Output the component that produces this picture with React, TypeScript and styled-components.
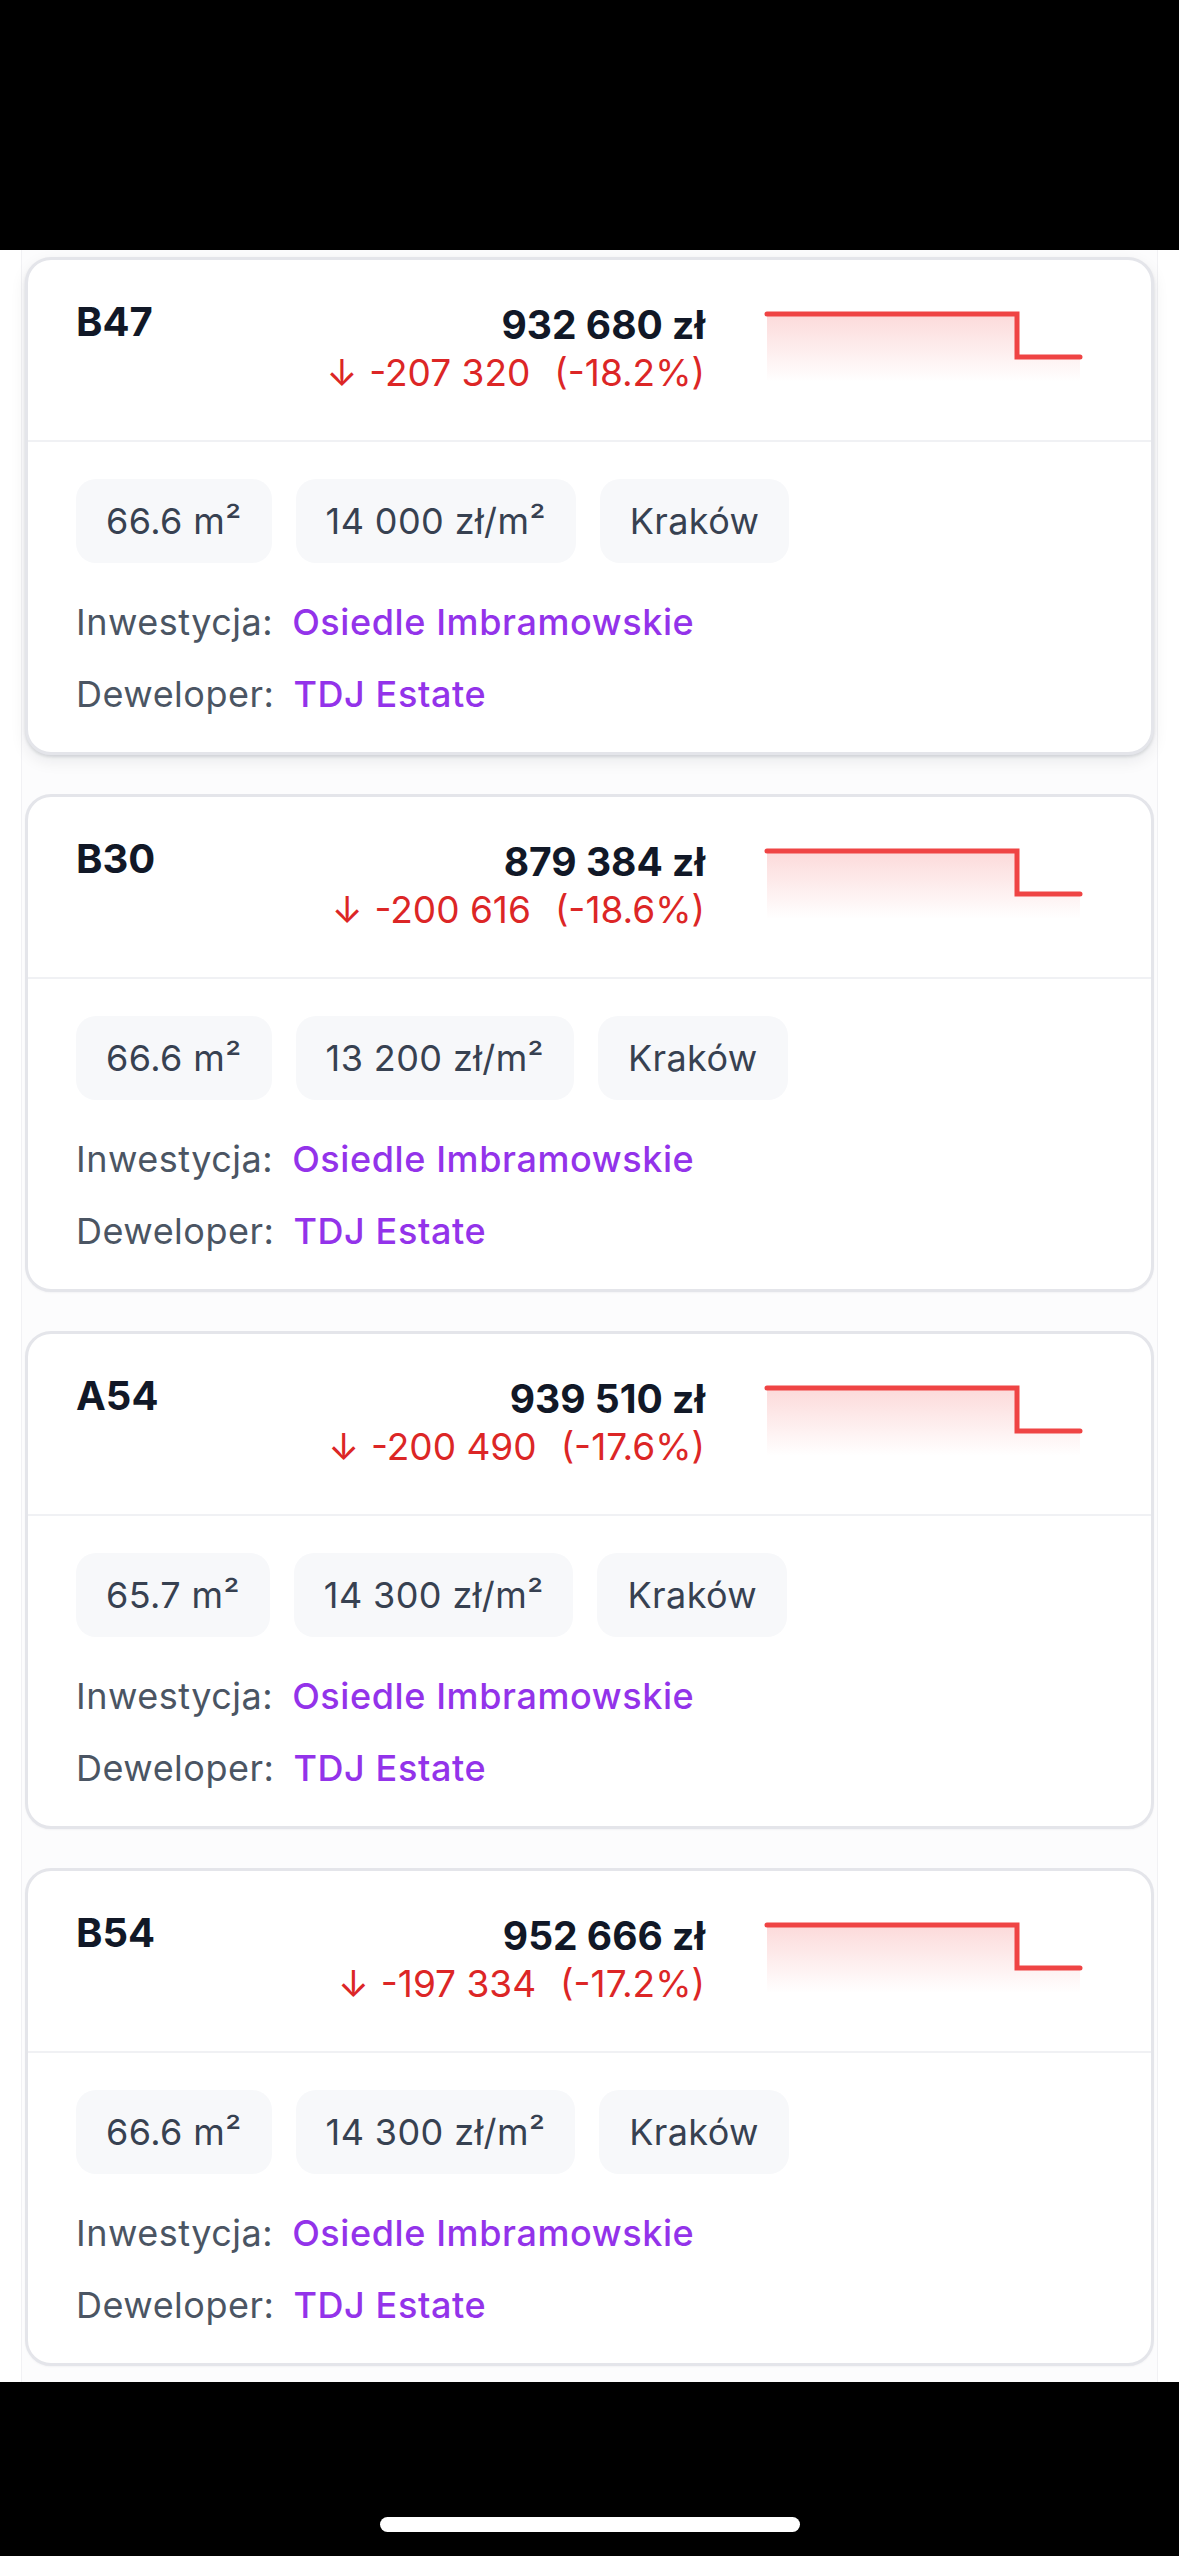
import React from "react";
import styled, { createGlobalStyle } from "styled-components";

interface Flat {
  id: string;
  price: string;
  change: string;
  percent: string;
  area: string;
  perMeter: string;
  city: string;
  investment: string;
  developer: string;
}

const flats: Flat[] = [
  {
    id: "B47",
    price: "932 680 zł",
    change: "-207 320",
    percent: "(-18.2%)",
    area: "66.6 m²",
    perMeter: "14 000 zł/m²",
    city: "Kraków",
    investment: "Osiedle Imbramowskie",
    developer: "TDJ Estate",
  },
  {
    id: "B30",
    price: "879 384 zł",
    change: "-200 616",
    percent: "(-18.6%)",
    area: "66.6 m²",
    perMeter: "13 200 zł/m²",
    city: "Kraków",
    investment: "Osiedle Imbramowskie",
    developer: "TDJ Estate",
  },
  {
    id: "A54",
    price: "939 510 zł",
    change: "-200 490",
    percent: "(-17.6%)",
    area: "65.7 m²",
    perMeter: "14 300 zł/m²",
    city: "Kraków",
    investment: "Osiedle Imbramowskie",
    developer: "TDJ Estate",
  },
  {
    id: "B54",
    price: "952 666 zł",
    change: "-197 334",
    percent: "(-17.2%)",
    area: "66.6 m²",
    perMeter: "14 300 zł/m²",
    city: "Kraków",
    investment: "Osiedle Imbramowskie",
    developer: "TDJ Estate",
  },
];

// small step chart, price dropped once at the end
function PriceChart({ id }: { id: string }) {
  const gradId = `fill-${id}`;
  return (
    <Chart width="358" height="90" viewBox="0 0 358 90">
      <defs>
        <linearGradient id={gradId} x1="0" y1="0" x2="0" y2="1">
          <stop offset="0%" stopColor="#ef4444" stopOpacity="0.2" />
          <stop offset="100%" stopColor="#ef4444" stopOpacity="0" />
        </linearGradient>
      </defs>
      <path d="M22 14 H272 V57 H335 V82 H22 Z" fill={`url(#${gradId})`} />
      <path
        d="M22 14 H272 V57 H335"
        fill="none"
        stroke="#ef4444"
        strokeWidth="5"
        strokeLinecap="round"
        strokeLinejoin="miter"
      />
    </Chart>
  );
}

function FlatCard({ flat, raised }: { flat: Flat; raised?: boolean }) {
  return (
    <Card $raised={raised}>
      <Header>
        <Name>{flat.id}</Name>
        <PriceBlock>
          <Price>{flat.price}</Price>
          <Change>
            <Arrow>↓</Arrow>
            <span>{flat.change}</span>
            <Percent>{flat.percent}</Percent>
          </Change>
        </PriceBlock>
        <PriceChart id={flat.id} />
      </Header>
      <Body>
        <Chips>
          <Chip>{flat.area}</Chip>
          <Chip>{flat.perMeter}</Chip>
          <Chip>{flat.city}</Chip>
        </Chips>
        <InfoRow>
          <Label>Inwestycja:</Label>
          <Value>{flat.investment}</Value>
        </InfoRow>
        <InfoRow>
          <Label>Deweloper:</Label>
          <Value>{flat.developer}</Value>
        </InfoRow>
      </Body>
    </Card>
  );
}

export default function App() {
  return (
    <>
      <GlobalStyle />
      <Screen>
        <TopBar />
        <List>
          {flats.map((flat, i) => (
            <FlatCard key={flat.id} flat={flat} raised={i === 0} />
          ))}
        </List>
        <BottomBar>
          <HomeIndicator />
        </BottomBar>
      </Screen>
    </>
  );
}

const GlobalStyle = createGlobalStyle`
  html, body {
    margin: 0;
    padding: 0;
    background: #ffffff;
  }
  body {
    font-family: Inter, "Noto Sans", sans-serif;
    -webkit-font-smoothing: antialiased;
  }
  * {
    box-sizing: border-box;
  }
`;

const Screen = styled.div`
  width: 1179px;
  height: 2556px;
  display: flex;
  flex-direction: column;
  overflow: hidden;
  background: #ffffff;
`;

const TopBar = styled.div`
  height: 250px;
  flex-shrink: 0;
  background: #000000;
`;

const List = styled.div`
  flex: 1;
  margin: 0 21px;
  padding: 7px 3px 16px;
  display: flex;
  flex-direction: column;
  gap: 39px;
  background: #fcfcfd;
  border-left: 1px solid #f1f1f4;
  border-right: 1px solid #f1f1f4;
`;

const Card = styled.div<{ $raised?: boolean }>`
  background: #ffffff;
  border: 3px solid #e4e5ea;
  border-radius: 26px;
  box-shadow: ${(p) =>
    p.$raised
      ? "0 6px 16px rgba(17, 24, 39, 0.08), 0 2px 3px rgba(17, 24, 39, 0.12)"
      : "0 1px 2px rgba(17, 24, 39, 0.04)"};
`;

const Header = styled.div`
  display: flex;
  align-items: flex-start;
  padding: 38px 48px 43px;
  border-bottom: 2px solid #f0f1f4;
`;

const Name = styled.div`
  flex: 1;
  font-size: 40px;
  line-height: 48px;
  font-weight: 700;
  color: #111827;
`;

const PriceBlock = styled.div`
  display: flex;
  flex-direction: column;
  align-items: flex-end;
  margin-top: 3px;
`;

const Price = styled.div`
  font-size: 39px;
  line-height: 48px;
  font-weight: 700;
  color: #111827;
`;

const Change = styled.div`
  font-size: 37px;
  line-height: 48px;
  font-weight: 400;
  color: #dc2626;
  white-space: pre;
`;

const Arrow = styled.span`
  margin-right: 12px;
`;

const Percent = styled.span`
  margin-left: 24px;
`;

const Chart = styled.svg`
  display: block;
  margin-left: 40px;
  margin-top: 2px;
  flex-shrink: 0;
`;

const Body = styled.div`
  padding: 37px 48px 34px;
  display: flex;
  flex-direction: column;
  gap: 24px;
`;

const Chips = styled.div`
  display: flex;
  gap: 24px;
  margin-bottom: 11px;
`;

const Chip = styled.div`
  height: 84px;
  padding: 0 30px;
  display: flex;
  align-items: center;
  background: #f7f8fa;
  border-radius: 20px;
  font-size: 36px;
  letter-spacing: 0.4px;
  color: #374151;
`;

const InfoRow = styled.div`
  display: flex;
  align-items: baseline;
  gap: 19px;
  font-size: 36px;
  line-height: 48px;
`;

const Label = styled.span`
  color: #4b5563;
  letter-spacing: 0.5px;
`;

const Value = styled.span`
  color: #9333ea;
  font-weight: 500;
  letter-spacing: 0.6px;
`;

const BottomBar = styled.div`
  height: 174px;
  flex-shrink: 0;
  background: #000000;
  display: flex;
  justify-content: center;
  align-items: flex-end;
  padding-bottom: 24px;
`;

const HomeIndicator = styled.div`
  width: 420px;
  height: 15px;
  border-radius: 8px;
  background: #ffffff;
`;
